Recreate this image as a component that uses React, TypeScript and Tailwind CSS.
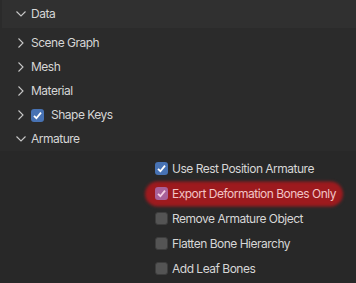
import React from "react";

const Chevron = ({ open }: { open: boolean }) => (
  <svg width="12" height="12" viewBox="0 0 12 12" className="shrink-0">
    {open ? (
      <path d="M1.5 3.5 L6 8 L10.5 3.5" fill="none" stroke="#c8c8c8" strokeWidth="1.1" />
    ) : (
      <path d="M3.5 1.5 L8 6 L3.5 10.5" fill="none" stroke="#c8c8c8" strokeWidth="1.1" />
    )}
  </svg>
);

const Check = ({ color }: { color: string }) => (
  <svg width="13" height="13" viewBox="0 0 13 13">
    <path d="M3 6.8 L5.4 9.2 L10 3.6" fill="none" stroke={color} strokeWidth="1.8" />
  </svg>
);

const Box = ({ state }: { state: "blue" | "pink" | "off" }) => {
  if (state === "blue")
    return (
      <div className="w-[13px] h-[13px] rounded-[3px] bg-[#4772b3] shrink-0 flex items-center justify-center">
        <Check color="#ffffff" />
      </div>
    );
  if (state === "pink")
    return (
      <div className="w-[13px] h-[13px] rounded-[3px] bg-[#a8619a] shrink-0 flex items-center justify-center">
        <Check color="#f5d0e4" />
      </div>
    );
  return <div className="w-[13px] h-[13px] rounded-[3px] bg-[#545454] border border-[#3d3d3d] shrink-0" />;
};

const Row = ({ open, label, box }: { open: boolean; label: string; box?: boolean }) => (
  <div className="h-[24px] flex items-center pl-[15px]">
    <Chevron open={open} />
    <div className="w-[4px]" />
    {box && (
      <>
        <Box state="blue" />
        <div className="w-[7px]" />
      </>
    )}
    <span className="whitespace-nowrap">{label}</span>
  </div>
);

const Opt = ({ label, state }: { label: string; state: "blue" | "pink" | "off" }) => (
  <div className="h-[25px] flex items-center pl-[155px] whitespace-nowrap">
    {state === "pink" ? (
      <div className="relative flex items-center">
        <div className="absolute left-[-10px] top-[50%] translate-y-[-50%] w-[198px] h-[25px] rounded-full bg-[#9d1a1e] blur-[1.5px]" />
        <div className="relative flex items-center">
          <Box state="pink" />
          <span className="ml-[4px] text-[#f2c4c6]">{label}</span>
        </div>
      </div>
    ) : (
      <>
        <Box state={state} />
        <span className="ml-[4px]">{label}</span>
      </>
    )}
  </div>
);

export default function App() {
  return (
    <div
      className="w-[356px] h-[283px] bg-[#2b2b2b] text-[#d6d6d6] text-[12px] tracking-[-0.5px] overflow-hidden"
      style={{ fontFamily: "Inter, 'DejaVu Sans', sans-serif" }}
    >
      <div className="ml-[2px] h-[28px] bg-[#303030] flex items-center pl-[13px]">
        <Chevron open />
        <span className="ml-[4px]">Data</span>
      </div>
      <div className="pt-[3px]">
        <Row open={false} label="Scene Graph" />
        <Row open={false} label="Mesh" />
        <Row open={false} label="Material" />
        <Row open={false} label="Shape Keys" box />
        <Row open label="Armature" />
      </div>
      <div className="bg-[#282828] pt-[5px] h-full">
        <Opt label="Use Rest Position Armature" state="blue" />
        <Opt label="Export Deformation Bones Only" state="pink" />
        <Opt label="Remove Armature Object" state="off" />
        <Opt label="Flatten Bone Hierarchy" state="off" />
        <Opt label="Add Leaf Bones" state="off" />
      </div>
    </div>
  );
}
